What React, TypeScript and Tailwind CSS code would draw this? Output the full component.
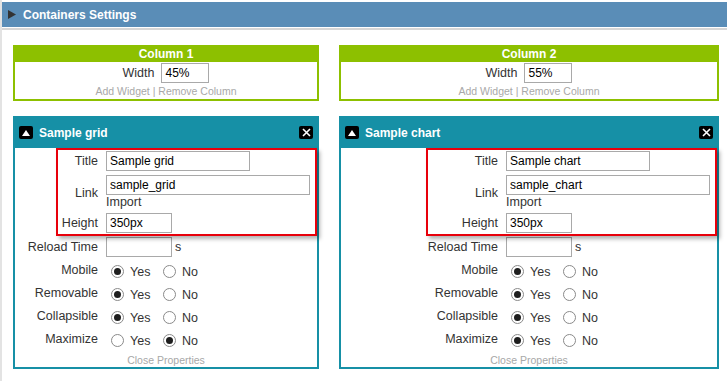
import React from "react";

const FONT = "font-['Liberation_Sans',Arial,sans-serif]";

function Radio({ checked }: { checked: boolean }) {
  return (
    <span className="w-[13px] h-[13px] rounded-full border border-[#8a8a8a] bg-white flex items-center justify-center shrink-0">
      {checked && <span className="w-[7px] h-[7px] rounded-full bg-[#1e1e1e]" />}
    </span>
  );
}

function RadioRow({ label, yes }: { label: string; yes: boolean }) {
  return (
    <div className="flex h-[23px] items-center">
      <div className="flex-1 text-right text-[#333] pb-[1px]">{label}</div>
      <div className="w-[204px] ml-[8px] flex items-center pt-[2px]">
        <span className="ml-[5px]"><Radio checked={yes} /></span>
        <span className="ml-[6px] w-[20px] pt-[2px] text-[#333]">Yes</span>
        <span className="ml-[13px]"><Radio checked={!yes} /></span>
        <span className="ml-[6px] pt-[2px] text-[#333]">No</span>
      </div>
    </div>
  );
}

function Field({ value, w }: { value: string; w: string }) {
  return (
    <input
      readOnly
      value={value}
      className={`${w} h-[20px] border border-[#a9a9a9] px-[3px] text-[12px] text-black bg-white outline-none ${FONT}`}
    />
  );
}

function Widget({
  width,
  title,
  link,
  maxYes,
  redLeft,
  redWidth,
}: {
  width: string;
  title: string;
  link: string;
  maxYes: boolean;
  redLeft: string;
  redWidth: string;
}) {
  return (
    <div className={`relative ${width}`}>
      <div className="h-[32px] bg-[#1690a6] flex items-center px-[6px] pt-[1px]">
        <span className="w-[14px] h-[13px] bg-black rounded-[2px] flex items-center justify-center">
          <svg width="8" height="6" viewBox="0 0 8 6">
            <polygon points="4,0 8,6 0,6" fill="white" />
          </svg>
        </span>
        <span className="ml-[6px] text-white font-bold text-[12px]">{title}</span>
        <span className="ml-auto w-[14px] h-[13px] bg-black rounded-[2px] flex items-center justify-center">
          <svg width="9" height="9" viewBox="0 0 9 9">
            <path d="M1 1 L8 8 M8 1 L1 8" stroke="white" strokeWidth="1.6" />
          </svg>
        </span>
      </div>
      <div className="border-2 border-t-0 border-[#1690a6] bg-white text-[12.5px]">
        <div className="px-[7px] pt-[1px]">
          <div className="flex h-[24px] items-center">
            <div className="flex-1 text-right text-[#333]">Title</div>
            <div className="w-[204px] ml-[8px] flex">
              <Field value={title} w="w-[144px]" />
            </div>
          </div>
          <div className="flex h-[38px] items-center">
            <div className="flex-1 text-right text-[#333] pt-[2px]">Link</div>
            <div className="w-[204px] ml-[8px] flex flex-col">
              <Field value={link} w="w-[204px]" />
              <span className="leading-[14px] text-[#333]">Import</span>
            </div>
          </div>
          <div className="flex h-[24px] items-center">
            <div className="flex-1 text-right text-[#333]">Height</div>
            <div className="w-[204px] ml-[8px] flex">
              <Field value="350px" w="w-[66px]" />
            </div>
          </div>
          <div className="flex h-[24px] items-center">
            <div className="flex-1 text-right text-[#333]">Reload Time</div>
            <div className="w-[204px] ml-[8px] flex items-center">
              <Field value="" w="w-[66px]" />
              <span className="ml-[3px] text-[#333]">s</span>
            </div>
          </div>
          <RadioRow label="Mobile" yes />
          <RadioRow label="Removable" yes />
          <RadioRow label="Collapsible" yes />
          <RadioRow label="Maximize" yes={maxYes} />
        </div>
        <div className="h-[16px] pt-[2px] leading-[14px] text-center text-[10.5px] text-[#a8a8a8]">
          Close Properties
        </div>
      </div>
      <div
        className={`absolute top-[32px] ${redLeft} ${redWidth} h-[88px] border-2 border-[#e8000b] shadow-[3px_3px_4px_rgba(0,0,0,0.3)]`}
      />
    </div>
  );
}

function ColumnBox({ width, title, value }: { width: string; title: string; value: string }) {
  return (
    <div className={width}>
      <div className="h-[17px] bg-[#8dc000] text-white font-bold text-[12px] flex items-center justify-center pt-[1px]">
        {title}
      </div>
      <div className="border-2 border-t-0 border-[#8dc000] bg-white pt-[1px] pb-[1px]">
        <div className="flex items-center justify-center h-[20px] text-[12.5px]">
          <span className="text-[#333]">Width</span>
          <input
            readOnly
            value={value}
            className={`ml-[7px] w-[48px] h-[20px] border border-[#a9a9a9] px-[3px] text-[12px] text-black outline-none ${FONT}`}
          />
        </div>
        <div className="mt-[1px] leading-[14px] text-center text-[10.5px] text-[#a8a8a8]">
          Add Widget | Remove Column
        </div>
      </div>
    </div>
  );
}

export default function App() {
  return (
    <div className={`w-[727px] h-[381px] overflow-hidden bg-white border-l-2 border-[#e3e3e3] ${FONT}`}>
      <div className="pt-[2px]">
        <div className="h-[25px] bg-[#5a8db7] flex items-center pl-[6px]">
          <svg width="8" height="9" viewBox="0 0 8 9">
            <polygon points="0,0 8,4.5 0,9" fill="#333" />
          </svg>
          <span className="ml-[7px] text-white font-bold text-[12px]">Containers Settings</span>
        </div>
      </div>
      <div className="mt-[1px] h-[2px] bg-[#d6d6d6]" />
      <div className="pl-[11px] pt-[15px]">
        <div className="flex gap-[20px]">
          <ColumnBox width="w-[306px]" title="Column 1" value="45%" />
          <ColumnBox width="w-[380px]" title="Column 2" value="55%" />
        </div>
        <div className="flex gap-[20px] mt-[15px]">
          <Widget
            width="w-[306px]"
            title="Sample grid"
            link="sample_grid"
            maxYes={false}
            redLeft="left-[43px]"
            redWidth="w-[261px]"
          />
          <Widget
            width="w-[380px]"
            title="Sample chart"
            link="sample_chart"
            maxYes={true}
            redLeft="left-[87px]"
            redWidth="w-[291px]"
          />
        </div>
      </div>
    </div>
  );
}
